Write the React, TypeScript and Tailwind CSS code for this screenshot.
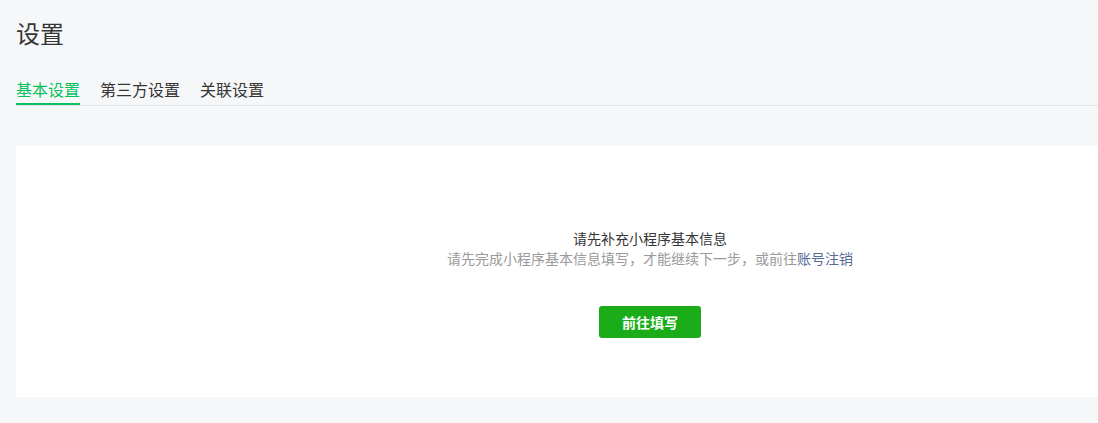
import React from 'react';

const tabs = ['基本设置', '第三方设置', '关联设置'];

export default function App() {
  return (
    <div className="h-[423px] w-full overflow-hidden bg-[#f6f7f9] font-['Noto_Sans_CJK_SC','Noto_Sans',sans-serif]">
      <div className="w-[1300px] px-4">
        <h1 className="pt-[17px] text-[24px] leading-[32px] font-normal text-[#353535]">设置</h1>

        <nav className="mt-[28px] flex gap-5 border-b border-[#e2e3e6]">
          {tabs.map((t, i) => (
            <div
              key={t}
              className={
                i === 0
                  ? 'pb-[2px] text-[16px] leading-[24px] text-[#07c160] border-b-2 border-[#07c160]'
                  : 'pb-[2px] text-[16px] leading-[24px] text-[#353535] border-b-2 border-transparent'
              }
            >
              {t}
            </div>
          ))}
        </nav>

        <section className="mt-[40px] flex h-[251px] w-[1268px] flex-col items-center bg-white pt-[82px] text-[14px] leading-[20px]">
          <p className="text-[#353535]">请先补充小程序基本信息</p>
          <p className="text-[#9a9a9a]">
            请先完成小程序基本信息填写，才能继续下一步，或前往
            <a className="text-[#576b95]" href="#">账号注销</a>
          </p>
          <button className="mt-[38px] h-[32px] w-[102px] rounded-[3px] bg-[#1aad19] text-[14px] font-bold text-white">
            前往填写
          </button>
        </section>
      </div>
    </div>
  );
}
